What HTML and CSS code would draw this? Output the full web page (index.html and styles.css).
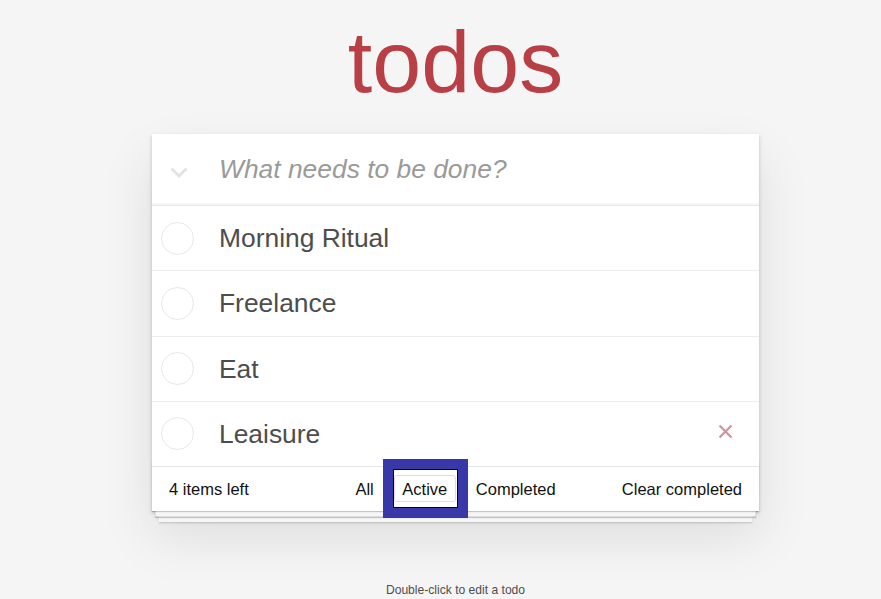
FILE: index.html
```html
<!DOCTYPE html>
<html lang="en">
<head>
<meta charset="utf-8">
<title>TodoMVC</title>
<link rel="stylesheet" href="styles.css">
</head>
<body>
<section class="todoapp">
  <h1 class="title">todos</h1>
  <div class="card">
    <header class="header">
      <span class="toggle-all"><svg width="18" height="11" viewBox="0 0 18 11"><polyline points="1.5,1.5 9,9 16.5,1.5" fill="none" stroke="#e3e3e3" stroke-width="2.8"/></svg></span>
      <input class="new-todo" placeholder="What needs to be done?">
    </header>
    <ul class="todo-list">
      <li class="todo"><span class="toggle"></span><span class="label">Morning Ritual</span></li>
      <li class="todo"><span class="toggle"></span><span class="label">Freelance</span></li>
      <li class="todo"><span class="toggle"></span><span class="label">Eat</span></li>
      <li class="todo"><span class="toggle"></span><span class="label">Leaisure</span><span class="destroy"><svg width="15" height="15" viewBox="0 0 15 15"><path d="M1.5 1.5L13.5 13.5M13.5 1.5L1.5 13.5" stroke="#cc9a9a" stroke-width="2.4" fill="none"/></svg></span></li>
    </ul>
    <footer class="footer">
      <span class="todo-count">4 items left</span>
      <ul class="filters"><li><a class="filter">All</a></li> <li><a class="filter selected focused">Active</a></li> <li><a class="filter">Completed</a></li></ul>
      <span class="clear-completed">Clear completed</span>
    </footer>
  </div>
  <p class="info">Double-click to edit a todo</p>
</section>
</body>
</html>
```

FILE: styles.css
```css
html, body {
  margin: 0;
  padding: 0;
}
body {
  background: #f5f5f5;
  font-family: "Liberation Sans", Arial, sans-serif;
  color: #111;
  padding-top: 12px;
}
.todoapp {
  width: 607px;
  margin-left: 152px;
}
.title {
  margin: 0;
  height: 100px;
  line-height: 100px;
  font-size: 88px;
  font-weight: 400;
  text-align: center;
  color: #b83f45;
}
.card {
  margin-top: 22px;
  background: #fff;
  position: relative;
  box-shadow: 0 2px 4px 0 rgba(0, 0, 0, 0.2), 0 25px 50px 0 rgba(0, 0, 0, 0.1);
}
.header {
  display: flex;
  align-items: center;
  height: 71px;
  box-shadow: inset 0 -2px 1px rgba(0, 0, 0, 0.03);
}
.toggle-all {
  width: 54px;
  flex: none;
  display: flex;
  justify-content: center;
  margin-top: 5px;
}
.toggle-all svg {
  display: block;
}
.new-todo {
  flex: 1;
  min-width: 0;
  height: 71px;
  box-sizing: border-box;
  border: none;
  outline: none;
  margin: 0;
  padding: 0 16px 1px 13px;
  background: transparent;
  font-family: inherit;
  font-size: 26.4px;
  color: #4d4d4d;
}
.new-todo::placeholder {
  font-style: italic;
  color: #9a9a9a;
}
.todo-list {
  list-style: none;
  margin: 0;
  padding: 0;
  border-top: 1px solid #e6e6e6;
}
.todo {
  display: flex;
  align-items: center;
  height: 64.25px;
  border-bottom: 1px solid #ededed;
}
.todo:last-child {
  border-bottom: none;
}
.toggle {
  flex: none;
  width: 33px;
  height: 33px;
  box-sizing: border-box;
  border-radius: 50%;
  border: 1px solid #e8e8e8;
  margin-left: 9px;
  margin-right: 25px;
}
.label {
  font-size: 26.4px;
  line-height: 32px;
  color: #4d4d4d;
}
.destroy {
  margin-left: auto;
  margin-right: 26px;
  margin-bottom: 4px;
  display: flex;
}
.destroy svg {
  display: block;
}
.footer {
  position: relative;
  display: grid;
  grid-template-columns: 1fr auto 1fr;
  box-sizing: border-box;
  height: 45px;
  padding: 12px 17px 0;
  border-top: 1px solid #e6e6e6;
  font-size: 16.5px;
  line-height: 20px;
  color: #111;
}
.footer::before {
  content: "";
  position: absolute;
  left: 0;
  right: 0;
  bottom: 0;
  height: 50px;
  pointer-events: none;
  box-shadow: 0 1px 1px rgba(0, 0, 0, 0.2),
    0 8.8px 0 -3.3px #f6f6f6,
    0 9.9px 1px -3.3px rgba(0, 0, 0, 0.2),
    0 17.6px 0 -6.6px #f6f6f6,
    0 18.7px 2px -6.6px rgba(0, 0, 0, 0.2);
}
.todo-count {
  justify-self: start;
}
.filters {
  list-style: none;
  margin: 0;
  padding: 0;
  text-align: center;
}
.filters li {
  display: inline;
}
.filter {
  position: relative;
  margin: 0 3.3px;
  padding: 4px 7.7px 3.3px;
  border: 1px solid transparent;
  border-radius: 3px;
  color: inherit;
  text-decoration: none;
}
.filter.selected {
  border-color: rgba(175, 47, 47, 0.2);
}
.filter.focused::after {
  content: "";
  position: absolute;
  top: -7px;
  bottom: -6.4px;
  left: -2px;
  right: -3px;
  border: 1px solid #000;
  box-shadow: 0 0 0 10px #3838a8;
}
.clear-completed {
  justify-self: end;
}
.info {
  margin: 72px 0 0;
  text-align: center;
  font-size: 12.1px;
  color: #4d4d4d;
}
```
